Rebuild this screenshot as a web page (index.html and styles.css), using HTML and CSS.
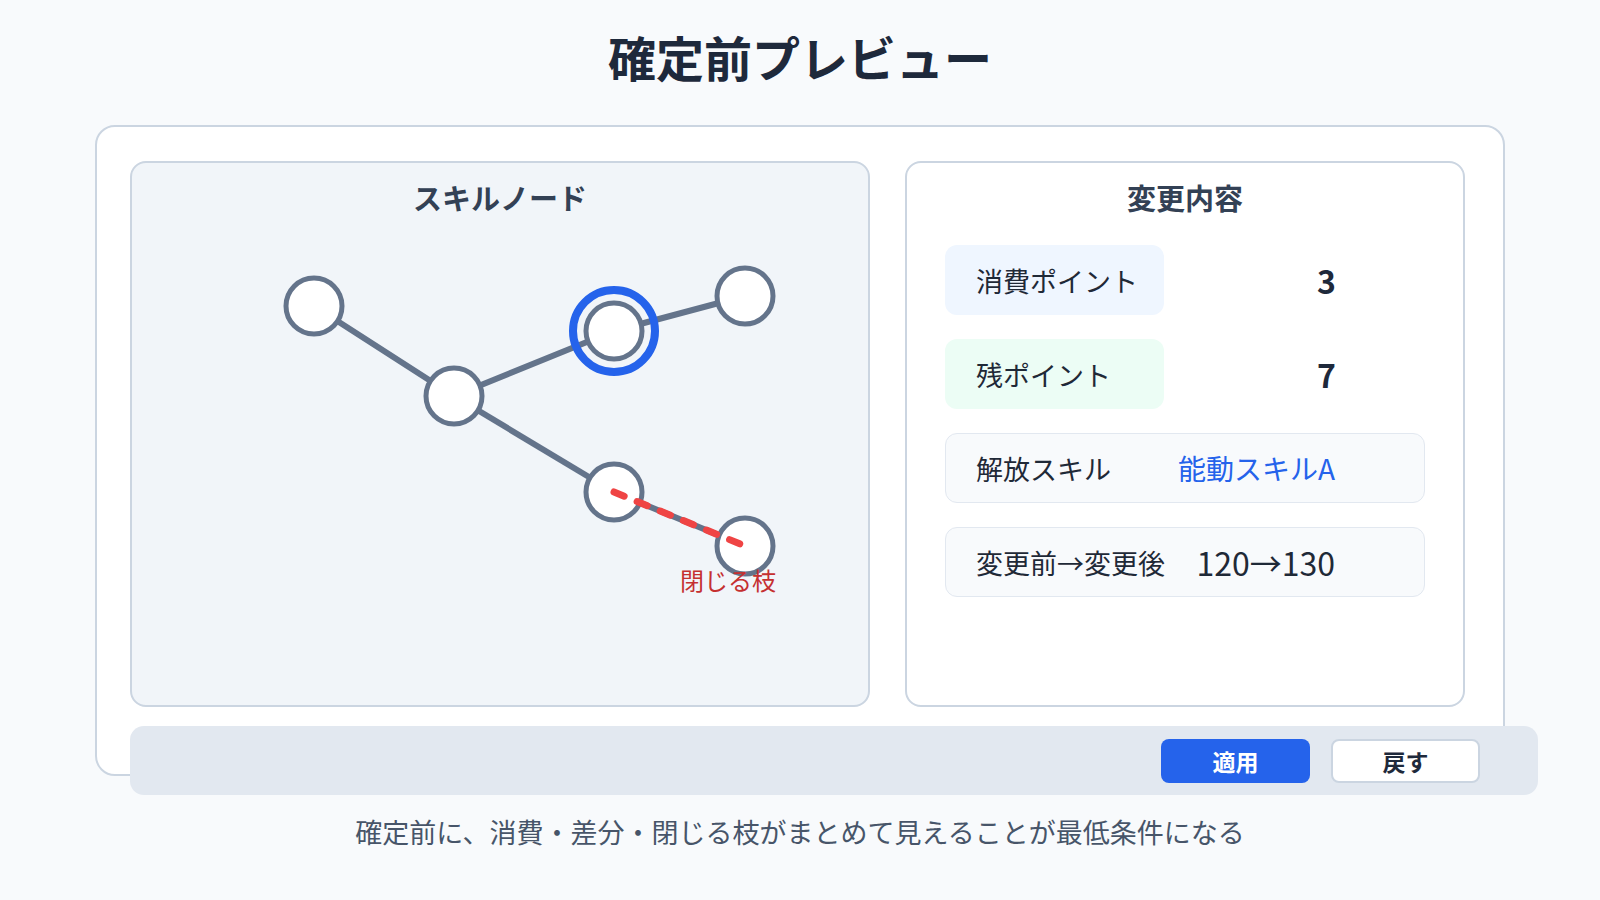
FILE: index.html
```html
<!DOCTYPE html>
<html lang="ja">
<head>
    <meta charset="UTF-8">
    <meta name="viewport" content="width=device-width, initial-scale=1.0">
    <title>確定前プレビュー</title>
    <link rel="stylesheet" href="styles.css">
</head>
<body>
    <h1 class="page-title">確定前プレビュー</h1>

    <div class="preview-card">
        <div class="preview-panels">
            <!-- Skill tree -->
            <section class="panel panel-tree">
                <h2 class="panel-title">スキルノード</h2>
                <svg class="tree-canvas" width="736" height="488" viewBox="0 0 736 488">
                    <g class="edges">
                        <line x1="182" y1="89" x2="322" y2="179"/>
                        <line x1="322" y1="179" x2="482" y2="114"/>
                        <line x1="482" y1="114" x2="613" y2="79"/>
                        <line x1="322" y1="179" x2="482" y2="275"/>
                        <line x1="482" y1="275" x2="613" y2="329"/>
                    </g>
                    <circle class="selected-ring" cx="482" cy="114" r="41"/>
                    <g class="nodes">
                        <circle cx="182" cy="89" r="28"/>
                        <circle cx="322" cy="179" r="28"/>
                        <circle cx="482" cy="114" r="28"/>
                        <circle cx="613" cy="79" r="28"/>
                        <circle cx="482" cy="275" r="28"/>
                        <circle cx="613" cy="329" r="28"/>
                    </g>
                    <line class="closing-edge" x1="482" y1="275" x2="613" y2="329"/>
                    <text class="closing-label" x="644" y="373">閉じる枝</text>
                </svg>
            </section>

            <!-- Summary -->
            <section class="panel panel-summary">
                <h2 class="panel-title">変更内容</h2>
                <div class="summary-list">
                    <div class="summary-row">
                        <span class="summary-pill pill-blue">消費ポイント</span>
                        <span class="summary-value value-strong">3</span>
                    </div>
                    <div class="summary-row">
                        <span class="summary-pill pill-green">残ポイント</span>
                        <span class="summary-value value-strong">7</span>
                    </div>
                    <div class="summary-row row-box">
                        <span class="summary-label">解放スキル</span>
                        <span class="summary-value value-link">能動スキルA</span>
                    </div>
                    <div class="summary-row row-box">
                        <span class="summary-label">変更前→変更後</span>
                        <span class="summary-value value-number">120→130</span>
                    </div>
                </div>
            </section>
        </div>

        <div class="action-bar">
            <button class="btn btn-primary">適用</button>
            <button class="btn btn-secondary">戻す</button>
        </div>
    </div>

    <p class="footnote">確定前に、消費・差分・閉じる枝がまとめて見えることが最低条件になる</p>
</body>
</html>
```

FILE: styles.css
```css
* {
    margin: 0;
    padding: 0;
    box-sizing: border-box;
}

body {
    background-color: #f8fafc;
    font-family: "Noto Sans CJK JP", "Noto Sans", sans-serif;
    color: #1e293b;
    width: 1600px;
    height: 900px;
    overflow: hidden;
}

.page-title {
    font-size: 48px;
    font-weight: 700;
    line-height: 52px;
    text-align: center;
    padding-top: 30px;
    margin-bottom: 43px;
    color: #1e293b;
}

.preview-card {
    width: 1410px;
    height: 651px;
    margin: 0 auto;
    background: white;
    border: 2px solid #cbd5e1;
    border-radius: 20px;
    padding: 34px 33px;
}

.preview-panels {
    display: flex;
    gap: 35px;
}

.panel {
    height: 546px;
    border: 2px solid #cbd5e1;
    border-radius: 16px;
    padding-top: 14px;
}

.panel-tree {
    width: 740px;
    background: #f1f5f9;
}

.panel-summary {
    width: 560px;
    background: white;
    padding-left: 38px;
    padding-right: 38px;
}

.panel-title {
    font-size: 29px;
    font-weight: 700;
    line-height: 40px;
    text-align: center;
    color: #334155;
}

.tree-canvas {
    display: block;
}

.edges line {
    stroke: #64748b;
    stroke-width: 6;
    stroke-linecap: round;
}

.selected-ring {
    fill: none;
    stroke: #2563eb;
    stroke-width: 8;
}

.nodes circle {
    fill: white;
    stroke: #64748b;
    stroke-width: 5;
}

.closing-edge {
    stroke: #ef4444;
    stroke-width: 7;
    stroke-linecap: round;
    stroke-dasharray: 11 14;
}

.closing-label {
    font-size: 24px;
    fill: #c53030;
    text-anchor: end;
}

.summary-list {
    display: flex;
    flex-direction: column;
    gap: 24px;
    margin-top: 28px;
}

.summary-row {
    display: flex;
    align-items: center;
    height: 70px;
    padding-right: 89px;
    font-size: 27px;
    color: #1f2937;
}

.summary-pill {
    width: 219px;
    height: 70px;
    display: flex;
    align-items: center;
    padding-left: 31px;
    border-radius: 12px;
}

.pill-blue {
    background: #eff6ff;
}

.pill-green {
    background: #ecfdf5;
}

.row-box {
    background: #f8fafc;
    border: 1px solid #e2e8f0;
    border-radius: 12px;
    padding-left: 30px;
}

.summary-label {
    white-space: nowrap;
}

.summary-value {
    margin-left: auto;
    white-space: nowrap;
    font-size: 28px;
}

.value-strong {
    font-size: 32px;
    font-weight: 700;
    color: #1e293b;
}

.value-link {
    color: #2563eb;
}

.value-number {
    font-size: 32px;
}

.action-bar {
    box-sizing: content-box;
    width: 100%;
    height: 69px;
    margin-top: 19px;
    padding: 0 58px 0 10px;
    background: #e2e8f0;
    border-radius: 14px;
    display: flex;
    align-items: center;
    justify-content: flex-end;
    gap: 21px;
}

.btn {
    width: 149px;
    height: 44px;
    border-radius: 8px;
    font-family: inherit;
    font-size: 23px;
    font-weight: 700;
    cursor: pointer;
}

.btn-primary {
    background: #2563eb;
    color: white;
    border: none;
}

.btn-secondary {
    background: white;
    color: #1e293b;
    border: 2px solid #cbd5e1;
}

.footnote {
    text-align: center;
    font-size: 27px;
    line-height: 36px;
    margin-top: 38px;
    color: #475569;
}
```
